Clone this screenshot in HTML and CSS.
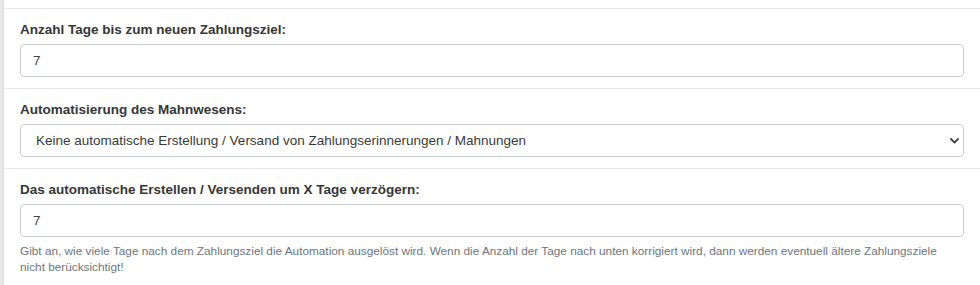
FILE: index.html
```html
<!DOCTYPE html>
<html lang="de">
<head>
  <meta charset="UTF-8">
  <meta name="viewport" content="width=device-width, initial-scale=1.0">
  <title>Mahnwesen Einstellungen</title>
  <link rel="stylesheet" href="styles.css">
</head>
<body>
  <div class="page">
    <div class="side-strip"></div>

    <!-- Settings form -->
    <div class="settings">
      <div class="form-row">
        <label class="form-label" for="days-target">Anzahl Tage bis zum neuen Zahlungsziel:</label>
        <input class="form-control" id="days-target" type="text" value="7">
      </div>

      <div class="form-row">
        <label class="form-label" for="dunning-mode">Automatisierung des Mahnwesens:</label>
        <div class="select-wrap">
          <select class="form-control form-select" id="dunning-mode">
            <option>Keine automatische Erstellung / Versand von Zahlungserinnerungen / Mahnungen</option>
          </select>
          <svg class="select-arrow" width="9" height="6" viewBox="0 0 9 6">
            <path d="M1 1 L4.5 4.6 L8 1" fill="none" stroke="#444" stroke-width="1.9" stroke-linecap="round" stroke-linejoin="round"/>
          </svg>
        </div>
      </div>

      <div class="form-row">
        <label class="form-label" for="delay-days">Das automatische Erstellen / Versenden um X Tage verzögern:</label>
        <input class="form-control" id="delay-days" type="text" value="7">
        <small class="form-help">Gibt an, wie viele Tage nach dem Zahlungsziel die Automation ausgelöst wird. Wenn die Anzahl der Tage nach unten korrigiert wird, dann werden eventuell ältere Zahlungsziele nicht berücksichtigt!</small>
      </div>
    </div>
  </div>
</body>
</html>
```

FILE: styles.css
```css
* {
  box-sizing: border-box;
  margin: 0;
  padding: 0;
}
body {
  font-family: "Liberation Sans", Arial, sans-serif;
  font-size: 13.5px;
  color: #333;
  background: #fff;
}
.page {
  display: flex;
  min-height: 285px;
}
.side-strip {
  width: 4px;
  background: #e7e7e9;
  border-right: 1px solid #dcdcde;
}
.settings {
  flex: 1;
  padding-top: 8px;
}
.form-row {
  display: flex;
  flex-direction: column;
  border-top: 1px solid #e8e8e8;
  padding: 12px 16px 11px 16px;
}
.form-label {
  font-weight: bold;
  line-height: 17px;
  margin-bottom: 6px;
  color: #363636;
}
.form-control {
  width: 100%;
  height: 33px;
  padding: 0 12px;
  font-family: inherit;
  font-size: 13.5px;
  color: #444;
  background: #fff;
  border: 1px solid #c9cdd1;
  border-radius: 4px;
  outline: none;
}
.select-wrap {
  position: relative;
}
.form-select {
  appearance: none;
  -webkit-appearance: none;
  padding-left: 15px;
  color: #3a3a3a;
}
.select-arrow {
  position: absolute;
  right: 5px;
  top: 14px;
  pointer-events: none;
}
.form-help {
  display: block;
  margin-top: 6px;
  font-size: 11.8px;
  line-height: 16px;
  color: #6c757d;
}
```
